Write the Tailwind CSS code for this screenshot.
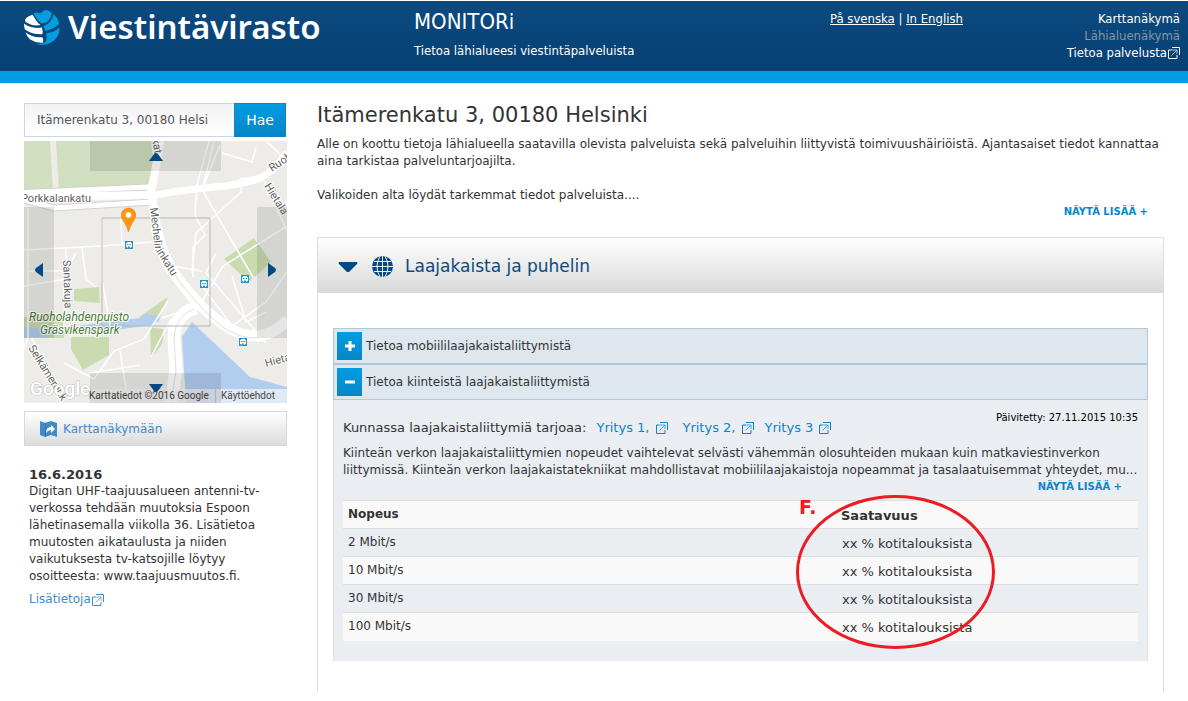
<!DOCTYPE html>
<html lang="fi">
<head>
<meta charset="utf-8">
<title>MONITORi</title>
<meta name="viewport" content="width=device-width, initial-scale=1">
<script src="https://cdn.jsdelivr.net/npm/@tailwindcss/browser@4"></script>
</head>
<body class="bg-white text-[#333] font-['DejaVu_Sans','Verdana',sans-serif] text-[12px] leading-[17px]">

<svg class="hidden" aria-hidden="true">
  <symbol id="ext" viewBox="0 0 12 12">
    <path d="M4 .5h7.500v7.500M4.500 3H.5v8.500H9V8" fill="none" stroke="currentColor"/>
    <path d="M3.500 8.500L8.500 3.500M5 3h4v4" fill="none" stroke="currentColor" stroke-opacity=".7"/>
  </symbol>
  <symbol id="bus" viewBox="0 0 8 8">
    <path fill="#1e98c8" d="M0 0h8v8H0z"/>
    <path fill="#fff" d="M2 1h4v1h1v4H6v1H5V6H3v1H2V6H1V2h1z"/>
    <path fill="#1e98c8" d="M2 3h1v1H2zM5 3h1v1H5zM3.500 3h1v1h-1zM3 5h2v.6H3z"/>
  </symbol>
</svg>

<header class="mt-px flex h-[82px] border-b-[12px] border-[#009de0] bg-linear-to-b from-[#0b4a80] to-[#084073] pr-2 pl-6 text-[13px] text-white font-['DejaVu_Sans_Condensed','Tahoma',sans-serif]">
  <a href="#" class="flex w-[390px] shrink-0 items-start gap-2 pt-2">
    <svg class="h-9 w-9" viewBox="0 0 37 37" aria-hidden="true">
      <path fill="#fff" d="M9 6Q4 7 1 11Q1 13 2 13.500Q9 18 17 16.500Q14 14 12 11Q10 8 9 6zM0 15Q0 19 1 21Q9 26.500 19 26Q19.500 22 18.500 19Q8 21 0 15zM1.500 24Q3 29 6 31Q13 35.500 19.500 34.500Q20.500 32 19 29Q9 30 1.500 24z"/>
      <path fill="#009de0" d="M10 4.500Q12 3 14 4Q17 5 18 3.500Q20 1 23 1Q26 1.500 28.500 4Q28.500 8 25 12Q22 15 18 15Q14 12 12.500 9Q11 7 10 4.500zM30.500 5.500Q35 9 36 15.500Q32 20 22 22.500Q21 20 20 17.500Q28 15 30.500 5.500zM36.500 19Q37 25 33 30Q28 36.500 18 37Q14 37 11 35.500Q17 37 22 34Q24 30 23 25Q31 24 36.500 19z"/>
    </svg>
    <span class="pt-[2px] font-['Noto_Sans'] text-[33px] leading-[32px] font-semibold">Viestintävirasto</span>
  </a>
  <div class="flex-1 pt-[9px]">
    <h1 class="text-[22px] leading-6">MONITORi</h1>
    <p class="pt-2">Tietoa lähialueesi viestintäpalveluista</p>
  </div>
  <nav class="w-[220px] pt-[9px]" aria-label="Kieli"><a href="#" class="underline">På svenska</a> | <a href="#" class="underline">In English</a></nav>
  <nav class="flex w-[130px] flex-col items-end pt-[9px]" aria-label="Näkymät">
    <a href="#">Karttanäkymä</a>
    <a href="#" class="text-[#8795a3]">Lähialuenäkymä</a>
    <a href="#" class="flex items-center gap-px">Tietoa palvelusta<svg class="size-3"><use href="#ext"/></svg></a>
  </nav>
</header>

<div class="flex items-start gap-[30px] px-6 pt-5">
  <aside class="w-[263px] shrink-0">
    <form class="flex h-[34px]">
      <div class="flex-1 border border-r-0 border-[#ccd6e6] bg-linear-to-b from-[#f3f3f6] to-white pr-[26px] pl-3">
        <input type="text" aria-label="Osoite" value="Itämerenkatu 3, 00180 Helsinki" class="h-full w-full bg-transparent text-[12px] text-[#555] outline-none">
      </div>
      <button type="button" class="mr-px w-[52px] border border-[#1b7fc0] bg-linear-to-b from-[#009de0] to-[#0586c8] text-[14px] text-white">Hae</button>
    </form>

    <div class="relative mt-1 h-[262px] overflow-hidden">
      <svg class="h-full w-full" viewBox="0 0 263 262" font-family="Roboto, sans-serif" role="img" aria-label="Kartta">
        <path fill="#edece8" d="M0 0h263v262H0z"/>
        <path fill="#cfdfbf" d="M0 0h127l3 28-6 15L0 51z"/>
        <path stroke="#edece8" stroke-width="6" d="M29 0l3 50"/>
        <path fill="#cbdbb0" d="M200 118l30-21 17 24-22 20zM50 148l25-2 1 16-26-2zM115 176l29-20-10 25zM47 196h38v18l-26 15-12-21zM126 186l13 2c2 14-3 20-12 28zM0 176h40v21H0z"/>
        <path fill="#b3cdef" d="M0 186l28 2 88-11 5-4 12 1 3 5-9 5-42 6-57 5-28 2zM158 196l10-15 58 55 37 10v16H162z"/>
        <g fill="none" stroke="#fff" stroke-width="1.500">
          <path d="M0 109l78-4 50-4M78 77v62l8 46M4 67v130l-4 10M4 130h38l10-18M42 107l-2 80M58 106l4 32 10 8M97 77l1 28M185 0l-12 44-2 30 10 20-12 12 0 30M196 4l-16 40v8l50 86M190 0l-12 50M263 85l-64 40-24 40-37 12M217 50l-1-12 14-2M218 50l-46 42-4 40M178 145l30 40 34-24 21-30M208 135l14 46 20-10M198 12l30 9 4-14M242 0l21 20M240 40l23 50M8 197l30 65M40 222l30 16 20-28 30-12 24-38M0 145l48-8M142 124l36 6M127 216l20-38M192 112l-10 20 60 70M66 232l50-8M96 210l8 50"/>
        </g>
        <path fill="none" stroke="#d3d2ce" stroke-width="7" d="M0 51.500L125 46M0 59l30 8 98-6"/>
        <g fill="none" stroke="#fff">
          <path stroke-width="5" d="M0 51.500L125 46M0 59l30 8 98-6"/>
          <path stroke-width="8" d="M0 56l127-2"/>
          <path stroke-width="7" d="M126 55q30-6 65-9 30-3 45-9 16-8 27-26"/>
          <path stroke-width="8" d="M136 0q-4 28-9 50l7 42"/>
          <path stroke-width="11" d="M132 86q6 34 26 57 20 26 42 41 18 12 34 11 16-2 30-16"/>
          <path stroke-width="13" d="M172 167q-22 6-22 30l2 32-5 33"/>
        </g>
        <path fill="none" stroke="#d8d7d3" stroke-width=".8" d="M170 168q-20 8-20 30l2 32-5 32M148 130q22 32 48 54 18 14 38 13"/>
        <path fill="none" stroke="#b5b5b3" d="M78 77h108v108H78z"/>
        <g fill="#5f5f5f" stroke="#fff" stroke-width="2" paint-order="stroke" font-size="11">
          <text x="-3" y="61">Porkkalankatu</text>
          <text transform="translate(126 67) rotate(83)">Mechelin</text>
          <text transform="translate(132 110) rotate(58)">inkatu</text>
          <text transform="translate(128 -2) rotate(80)">kat</text>
          <text transform="translate(39 119) rotate(88)">Santakuja</text>
          <text transform="translate(248 31) rotate(-34)">Ruoh</text>
          <text transform="translate(240 45) rotate(58)">Hietala</text>
          <text transform="translate(242 226) rotate(-15)">Hieta</text>
          <text transform="translate(4 207) rotate(58)">Selkämerenk</text>
          <g fill="#487a31" font-style="italic" font-size="12">
            <text x="5" y="180">Ruoholahdenpuisto</text><text x="16" y="193">Gräsvikenspark</text>
          </g>
        </g>
        <use href="#bus" x="101" y="100" width="8" height="8"/><use href="#bus" x="176" y="139" width="8" height="8"/>
        <use href="#bus" x="217" y="134" width="8" height="8"/><use href="#bus" x="215" y="197" width="8" height="8"/>
        <path fill="#fd9710" stroke="#e08a20" stroke-width=".6" d="M104.500 91q-2-7-5-11-3-4-2-8 2-5 7-5t7 5q1 4-2 8-3 4-5 11z"/>
        <circle cx="104.500" cy="74" r="2.800" fill="#fff"/>
        <path fill="#f5f5f5" fill-opacity=".7" d="M66 248h197v14H66z"/>
        <path stroke="#c4c8cc" d="M191.500 248v14"/>
        <text x="6" y="254" font-size="19" font-weight="500" fill="#fff" stroke="#bbb" stroke-width="1" paint-order="stroke">Google</text>
        <g fill="#444" font-size="10"><text x="65" y="258">Karttatiedot ©2016 Google</text><text x="197" y="258">Käyttöehdot</text></g>
      </svg>
      <button type="button" aria-label="Pohjoiseen" class="absolute top-0 left-[66px] flex h-[30px] w-[131px] justify-center bg-black/10 pt-3"><svg class="h-2 w-[14px] fill-[#034a85]" viewBox="0 0 14 8"><path d="M0 8L5 1q2-2 4 0l5 7z"/></svg></button>
      <button type="button" aria-label="Länteen" class="absolute top-[66px] left-0 flex h-[131px] w-[30px] items-start justify-center bg-black/10 pt-14"><svg class="h-[14px] w-2 fill-[#034a85]" viewBox="0 0 8 14"><path d="M8 0v14L1 9q-2-2 0-4z"/></svg></button>
      <button type="button" aria-label="Itään" class="absolute top-[66px] right-0 flex h-[131px] w-[30px] items-start justify-center bg-black/10 pt-14"><svg class="h-[14px] w-2 fill-[#034a85]" viewBox="0 0 8 14"><path d="M0 0v14l7-5q2-2 0-4z"/></svg></button>
      <button type="button" aria-label="Etelään" class="absolute bottom-0 left-[66px] flex h-[30px] w-[131px] justify-center bg-black/10 pt-[11px]"><svg class="h-2 w-[14px] fill-[#034a85]" viewBox="0 0 14 8"><path d="M0 0h14L9 7q-2 2-4 0z"/></svg></button>
    </div>

    <a href="#" class="mt-2 flex h-[35px] items-center gap-[6px] border border-[#d8d8d8] bg-linear-to-b from-white to-[#dcdcdc] pt-px pl-[15px] text-[#428bca]">
      <svg class="h-4 w-[17px]" viewBox="0 0 17 16" aria-hidden="true"><path fill="#428bca" d="M0 0l5 2 6-2 6 2v14l-6-2-6 2-5-2z"/><path fill="#2f74b0" d="M5 2l1-.4v14L5 16z"/><path fill="#fff" d="M6 12q0-6 5-6V4l4 4-4 4V9q-3 0-5 3z"/></svg>
      Karttanäkymään
    </a>

    <section class="pt-5 pl-[5px]">
      <h2 class="text-[13px] font-bold">16.6.2016</h2>
      <p class="w-[240px]">Digitan UHF-taajuusalueen antenni-tv-<br>verkossa tehdään muutoksia Espoon<br>lähetinasemalla viikolla 36. Lisätietoa<br>muutosten aikataulusta ja niiden<br>vaikutuksesta tv-katsojille löytyy<br>osoitteesta: www.taajuusmuutos.fi.</p>
      <a href="#" class="mt-[6px] flex items-center gap-px text-[#428bca]">Lisätietoja<svg class="size-3"><use href="#ext"/></svg></a>
    </section>
  </aside>

  <main class="min-w-0 flex-1">
    <h2 class="text-[21px] leading-6">Itämerenkatu 3, 00180 Helsinki</h2>
    <p class="pt-[9px]">Alle on koottu tietoja lähialueella saatavilla olevista palveluista sekä palveluihin liittyvistä toimivuushäiriöistä. Ajantasaiset tiedot kannattaa aina tarkistaa palveluntarjoajilta.</p>
    <p class="pt-[17px]">Valikoiden alta löydät tarkemmat tiedot palveluista....</p>
    <div class="pr-4 text-right text-[10px] leading-4 font-bold text-[#0a84cb]"><a href="#">NÄYTÄ LISÄÄ +</a></div>

    <section class="mt-[17px] border-x border-t border-[#ddd]">
      <button type="button" class="flex h-[55px] w-full items-center bg-linear-to-b from-white to-[#d9d9d9] pt-[2px] pl-5 text-[17px] text-[#0b4a80]">
        <svg class="mr-[14px] h-[10px] w-5 fill-[#034a85]" viewBox="0 0 20 10"><path d="M1 0h18q1 1 0 2l-8 8H9L1 2Q0 1 1 0z"/></svg>
        <svg class="mr-3 size-[21px]" viewBox="0 0 21 21"><circle cx="10.500" cy="10.500" r="10.500" fill="#034a85"/><path fill="none" stroke="#f2f2f2" d="M10.500 0v21M0 10.500h21M2 5.500h17M2 15.500h17M8 0q-6 10.500 0 21M13 0q6 10.500 0 21"/></svg>
        Laajakaista ja puhelin
      </button>
      <div class="px-[15px] pt-[35px] pb-[31px]">
        <div class="flex h-9 items-center gap-1 border border-[#b0c8dc] bg-[#dfe7ee] pl-[3px]">
          <button type="button" aria-label="Avaa" class="flex h-7 w-[25px] items-center justify-center bg-linear-to-b from-[#009de0] to-[#0586c8]"><svg class="size-[10px] fill-white" viewBox="0 0 10 10"><path d="M3.500 0h3v3.500H10v3H6.500V10h-3V6.500H0v-3h3.500z"/></svg></button>
          Tietoa mobiililaajakaistaliittymistä
        </div>
        <div class="flex h-9 items-center gap-1 border border-[#b0c8dc] bg-[#dfe7ee] pl-[3px]">
          <button type="button" aria-label="Sulje" class="flex h-7 w-[25px] items-center justify-center bg-linear-to-b from-[#009de0] to-[#0586c8]"><svg class="size-[10px] fill-white" viewBox="0 0 10 10"><path d="M0 3.500h10v3H0z"/></svg></button>
          Tietoa kiinteistä laajakaistaliittymistä
        </div>
        <div class="border-x border-[#dde2e7] bg-[#eaeef3] px-[9px] pt-2 pb-5">
          <div class="flex justify-between">
            <p class="flex items-center pt-3 text-[13px] leading-4">Kunnassa laajakaistaliittymiä tarjoaa:
              <a href="#" class="ml-[10px] flex items-center gap-[7px] text-[#0a84cb]">Yritys 1, <svg class="size-3"><use href="#ext"/></svg></a>
              <a href="#" class="ml-[14px] flex items-center gap-[7px] text-[#0a84cb]">Yritys 2, <svg class="size-3"><use href="#ext"/></svg></a>
              <a href="#" class="ml-[10px] flex items-center gap-[6px] text-[#0a84cb]">Yritys 3 <svg class="size-3"><use href="#ext"/></svg></a>
            </p>
            <p class="text-[10px] leading-5 text-black">Päivitetty: 27.11.2015 10:35</p>
          </div>
          <p class="pt-[9px] whitespace-nowrap">Kiinteän verkon laajakaistaliittymien nopeudet vaihtelevat selvästi vähemmän olosuhteiden mukaan kuin matkaviestinverkon<br>liittymissä. Kiinteän verkon laajakaistatekniikat mahdollistavat mobiililaajakaistoja nopeammat ja tasalaatuisemmat yhteydet, mu...</p>
          <div class="pr-4 text-right text-[10px] leading-4 font-bold text-[#0a84cb]"><a href="#">NÄYTÄ LISÄÄ +</a></div>
          <div class="relative mt-[5px]">
            <table class="w-full table-fixed text-left">
              <thead><tr class="h-7 border-t border-[#ddd] bg-[#f9f9f9]"><th class="w-[498px] pl-[5px]">Nopeus</th><th class="pt-[2px] text-[13px]">Saatavuus</th></tr></thead>
              <tbody>
                <tr class="h-7 border-t border-[#ddd]"><td class="pl-[5px]">2 Mbit/s</td><td class="pt-[2px] pl-px text-[13px]">xx % kotitalouksista</td></tr>
                <tr class="h-7 border-t border-[#ddd] bg-[#f9f9f9]"><td class="pl-[5px]">10 Mbit/s</td><td class="pt-[2px] pl-px text-[13px]">xx % kotitalouksista</td></tr>
                <tr class="h-7 border-t border-[#ddd]"><td class="pl-[5px]">30 Mbit/s</td><td class="pt-[2px] pl-px text-[13px]">xx % kotitalouksista</td></tr>
                <tr class="h-7 border-t border-[#ddd] bg-[#f9f9f9]"><td class="pl-[5px]">100 Mbit/s</td><td class="pt-[2px] pl-px text-[13px]">xx % kotitalouksista</td></tr>
              </tbody>
            </table>
            <span class="absolute -top-[3px] left-[456px] text-[19px] leading-5 font-bold text-[#ed1c24]">F.</span>
            <div class="pointer-events-none absolute -top-[5px] left-[453px] h-[154px] w-[199px] rounded-[50%] border-[3px] border-[#ed1c24]"></div>
          </div>
        </div>
      </div>
    </section>
  </main>
</div>
</body>
</html>
